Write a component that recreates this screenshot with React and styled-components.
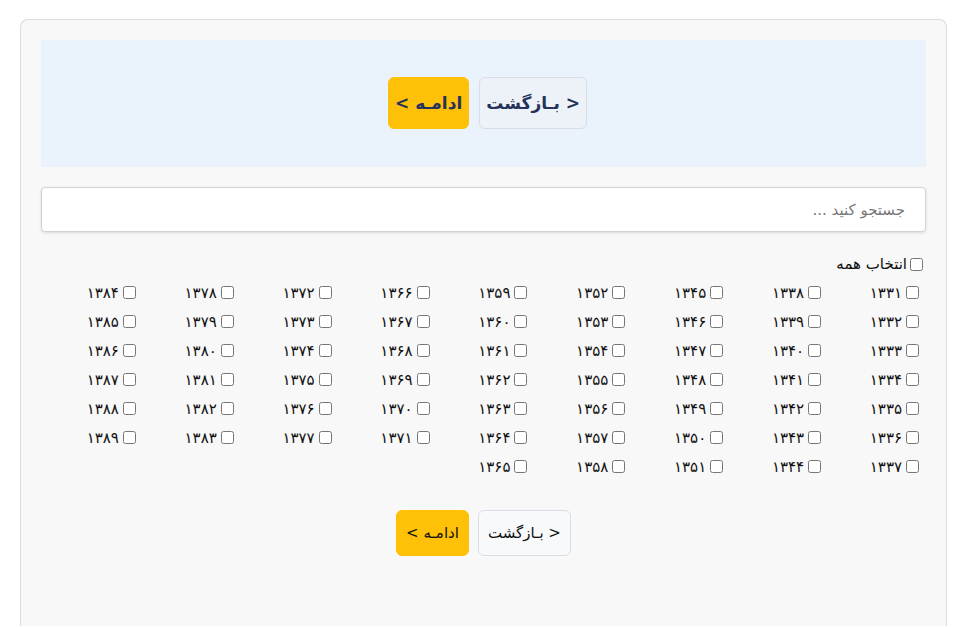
import React from 'react'
import styled, { createGlobalStyle } from 'styled-components'

const GlobalStyle = createGlobalStyle`
  html, body {
    margin: 0;
    padding: 0;
    background: #ffffff;
  }
  body {
    font-family: "DejaVu Sans", "Noto Sans", sans-serif;
    color: #111;
  }
`

const toFa = (n) => String(n).replace(/\d/g, (d) => '۰۱۲۳۴۵۶۷۸۹'[d])

// 59 years split into 9 columns: five of seven, then four of six
const years = Array.from({ length: 59 }, (_, i) => 1331 + i)
const columns = []
for (let c = 0, i = 0; c < 9; c++) {
  const size = c < 5 ? 7 : 6
  columns.push(years.slice(i, i + size))
  i += size
}

const Page = styled.div`
  direction: rtl;
  padding: 19px 20px 0;
`

const Card = styled.div`
  background: #f8f8f8;
  border: 1px solid #dcdcdc;
  border-bottom: none;
  border-radius: 8px 8px 0 0;
  padding: 20px 20px 70px;
  min-height: 520px;
  box-sizing: border-box;
`

const Banner = styled.div`
  background: #eaf2fb;
  padding: 37px 0 38px 8px;
  display: flex;
  justify-content: center;
  gap: 10px;
`

const Button = styled.button`
  font-family: "DejaVu Sans", sans-serif;
  direction: rtl;
  border-radius: 6px;
  cursor: pointer;
  height: ${(p) => (p.$big ? '52px' : '46px')};
  padding: 0 ${(p) => (p.$big ? '6px' : '9px')};
  font-size: ${(p) => (p.$big ? '17px' : '15px')};
  font-weight: ${(p) => (p.$big ? 700 : 400)};
  color: ${(p) => (p.$big ? '#27325a' : '#111')};
  background: ${(p) => (p.$primary ? '#ffc107' : p.$big ? '#edf2f9' : '#f8f9fa')};
  border: 1px solid ${(p) => (p.$primary ? '#ffc107' : '#d9dee6')};
`

const Search = styled.input`
  display: block;
  width: 100%;
  box-sizing: border-box;
  margin-top: 20px;
  height: 45px;
  border: 1px solid #cfd3d8;
  border-radius: 4px;
  background: #fff;
  box-shadow: 0 1px 3px rgba(0, 0, 0, 0.12);
  padding: 0 20px;
  font-family: "DejaVu Sans", sans-serif;
  font-size: 15px;
  direction: rtl;
  outline: none;
  &::placeholder {
    color: #777;
  }
`

const SelectAll = styled.label`
  display: flex;
  align-items: center;
  gap: 3px;
  margin-top: 23px;
  font-size: 15px;
  line-height: 18px;
`

const Box = styled.input`
  width: 13px;
  height: 13px;
  margin: 0 3px 0 0;
  flex: none;
`

const YearGrid = styled.div`
  display: grid;
  grid-template-columns: repeat(9, 1fr);
  margin-top: 5px;
  padding-right: 4px;
`

const Column = styled.div`
  display: flex;
  flex-direction: column;
`

const Year = styled.label`
  display: flex;
  align-items: center;
  gap: 4px;
  height: 29px;
  font-size: 15px;
`

const Footer = styled.div`
  display: flex;
  justify-content: center;
  gap: 9px;
  margin-top: 29px;
`

export default function App() {
  return (
    <Page>
      <GlobalStyle />
      <Card>
        <Banner>
          <Button $big>&lt; بـازگشت</Button>
          <Button $big $primary>ادامـه &gt;</Button>
        </Banner>
        <Search placeholder="جستجو کنید ..." />
        <SelectAll>
          <Box type="checkbox" />
          انتخاب همه
        </SelectAll>
        <YearGrid>
          {columns.map((col, c) => (
            <Column key={c}>
              {col.map((y) => (
                <Year key={y}>
                  <Box type="checkbox" />
                  {toFa(y)}
                </Year>
              ))}
            </Column>
          ))}
        </YearGrid>
        <Footer>
          <Button>&lt; بـازگشت</Button>
          <Button $primary>ادامـه &gt;</Button>
        </Footer>
      </Card>
    </Page>
  )
}
